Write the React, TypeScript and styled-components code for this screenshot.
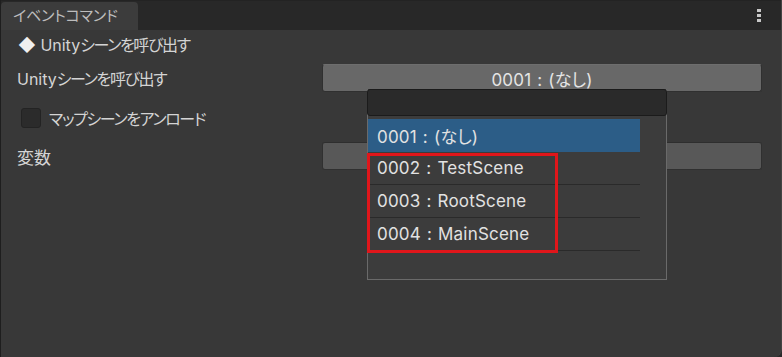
import styled, { createGlobalStyle } from 'styled-components'

const GlobalStyle = createGlobalStyle`
  html, body {
    margin: 0;
    padding: 0;
    background: #2a2a2a;
  }
  body {
    font-family: Inter, "Noto Sans CJK JP", sans-serif;
    font-feature-settings: "palt";
    -webkit-font-smoothing: antialiased;
  }
`

const options = [
  { id: '0001', name: '(なし)' },
  { id: '0002', name: 'TestScene' },
  { id: '0003', name: 'RootScene' },
  { id: '0004', name: 'MainScene' },
]

function App() {
  return (
    <>
      <GlobalStyle />
      <Window>
        <TabBar>
          <Tab>イベントコマンド</Tab>
          <Kebab aria-label="menu">
            <Dot />
            <Dot />
            <Dot />
          </Kebab>
        </TabBar>
        <Body>
          <Heading>
            <Diamond>◆</Diamond> Unity<Jp>シーンを呼び出す</Jp>
          </Heading>
          <Row $top={8}>
            <Label>
              Unity<Jp>シーンを呼び出す</Jp>
            </Label>
            <Popup>0001 : (なし)</Popup>
          </Row>
          <Row $top={12}>
            <CheckRow>
              <Checkbox />
              <Jp>マップシーンをアンロード</Jp>
            </CheckRow>
          </Row>
          <Row $top={10}>
            <Label $wide>変数</Label>
            <Popup $dim />
          </Row>
        </Body>

        <Dropdown>
          <Search />
          <List>
            {options.map((o, i) => (
              <Item key={o.id} $selected={i === 0}>
                {o.id} : {o.name}
              </Item>
            ))}
          </List>
        </Dropdown>
        <Highlight />
      </Window>
    </>
  )
}

export default App

const Window = styled.div`
  position: relative;
  width: 782px;
  height: 357px;
  box-sizing: border-box;
  display: flex;
  flex-direction: column;
  background: #383838;
  border-left: 1px solid #1e1e1e;
  border-right: 1px solid #444;
  border-bottom-right-radius: 8px;
  overflow: hidden;
`

const TabBar = styled.div`
  height: 30px;
  flex: none;
  display: flex;
  align-items: flex-end;
  justify-content: space-between;
  background: #282828;
  border-top: 1px solid #232323;
  box-sizing: border-box;
`

const Tab = styled.div`
  height: 28px;
  width: 137px;
  box-sizing: border-box;
  padding: 4px 0 0 12px;
  background: #3c3c3c;
  border-radius: 4px 4px 0 0;
  color: #bdbdbd;
  font-size: 15px;
  line-height: 20px;
  letter-spacing: -0.2px;
`

const Kebab = styled.div`
  align-self: center;
  margin-right: 20px;
  display: flex;
  flex-direction: column;
  gap: 2px;
`

const Dot = styled.span`
  width: 4px;
  height: 3px;
  background: #c8c8c8;
`

const Body = styled.div`
  display: flex;
  flex-direction: column;
  padding: 4px 19px 0 16px;
  color: #d4d4d4;
  font-size: 16px;
`

const Jp = styled.span`
  letter-spacing: -1.4px;
`

const Diamond = styled.span`
  font-size: 17px;
  color: #f0f0f0;
`

const Heading = styled.div`
  height: 22px;
  line-height: 22px;
  padding-left: 1px;
`

const Row = styled.div<{ $top: number }>`
  display: flex;
  align-items: center;
  height: 28px;
  margin-top: ${(p) => p.$top}px;
`

const Label = styled.div<{ $wide?: boolean }>`
  width: 305px;
  flex: none;
  font-size: ${(p) => (p.$wide ? '17px' : '16px')};
`

const Popup = styled.div<{ $dim?: boolean }>`
  flex: 1;
  height: 28px;
  box-sizing: border-box;
  display: flex;
  align-items: center;
  justify-content: center;
  background: ${(p) => (p.$dim ? '#585858' : '#686868')};
  border: 1px solid #303030;
  border-top-color: ${(p) => (p.$dim ? '#2e2e2e' : '#6e6e6e')};
  border-radius: 3px;
  color: #e4e4e4;
  font-size: 17px;
  letter-spacing: 0.2px;
  word-spacing: 1px;
`

const CheckRow = styled.div`
  display: flex;
  align-items: center;
  gap: 8px;
  padding-left: 4px;
`

const Checkbox = styled.span`
  width: 20px;
  height: 20px;
  box-sizing: border-box;
  background: #2b2b2b;
  border: 1px solid #232323;
  border-radius: 3px;
`

const Dropdown = styled.div`
  position: absolute;
  left: 366px;
  top: 89px;
  width: 300px;
  height: 191px;
  box-sizing: border-box;
  display: flex;
  flex-direction: column;
  background: #3c3c3c;
  border: 1px solid #6a6a6a;
  border-top: none;
`

const Search = styled.div`
  height: 27px;
  margin: 0 -1px;
  box-sizing: border-box;
  background: #2a2a2a;
  border: 1px solid #1b1b1b;
  border-radius: 3px;
`

const List = styled.div`
  margin-top: 3px;
  width: 272px;
  display: flex;
  flex-direction: column;
`

const Item = styled.div<{ $selected?: boolean }>`
  height: 33px;
  box-sizing: border-box;
  display: flex;
  align-items: center;
  padding-left: 9px;
  font-size: 17px;
  letter-spacing: 0.2px;
  word-spacing: 1px;
  color: #e2e2e2;
  background: ${(p) => (p.$selected ? '#2c5d87' : 'transparent')};
  border-bottom: 1px solid ${(p) => (p.$selected ? '#2c5d87' : '#2a2a2a')};
`

const Highlight = styled.div`
  position: absolute;
  left: 366px;
  top: 153px;
  width: 191px;
  height: 100px;
  box-sizing: border-box;
  border: 3px solid #e0161b;
  pointer-events: none;
`
